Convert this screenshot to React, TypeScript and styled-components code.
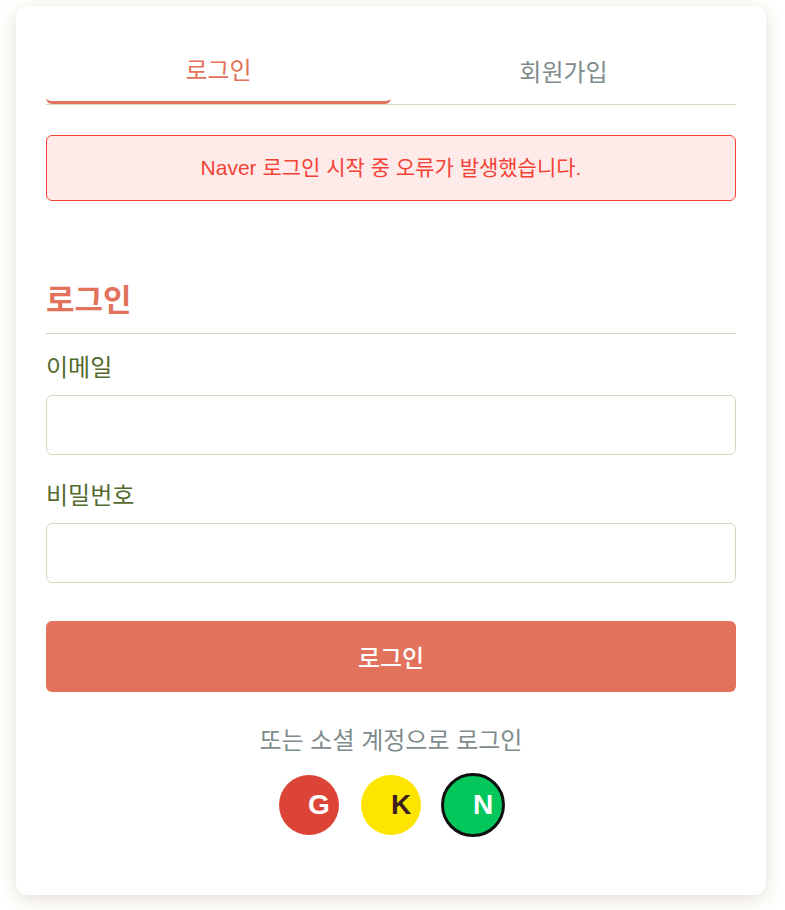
import React from 'react';
import styled, { createGlobalStyle } from 'styled-components';

const GlobalStyle = createGlobalStyle`
  *, *::before, *::after { box-sizing: border-box; }
  body {
    margin: 0;
    background: #fffffe;
    color: #556b2f;
    font-family: "Liberation Sans", "Noto Sans CJK KR", sans-serif;
    font-size: 24px;
  }
`;

const Card = styled.main`
  margin: 6px 19px 15px 16px;
  padding: 30px 30px 60px;
  background: #fff;
  border-radius: 12px;
  box-shadow: 0 4px 18px rgba(110, 95, 35, 0.2);
`;

const Tabs = styled.div`
  display: flex;
  border-bottom: 1px solid #d9d5c0;
`;

const Tab = styled.button<{ $active?: boolean }>`
  flex: 1;
  height: 68px;
  padding: 0;
  border: 0;
  border-bottom: ${p => (p.$active ? '3px solid #e2725b' : '0')};
  border-radius: 6px;
  background: transparent;
  color: ${p => (p.$active ? '#e2725b' : '#7f8c8d')};
  font: inherit;
`;

const Alert = styled.div`
  margin-top: 30px;
  padding: 16px;
  border: 1px solid #f44336;
  border-radius: 6px;
  background: #feebe9;
  color: #f44336;
  font-size: 21px;
  line-height: 32px;
  text-align: center;
`;

const Form = styled.form`
  display: flex;
  flex-direction: column;
  margin-top: 76px;
`;

const Title = styled.h2`
  margin: 0 0 16px;
  padding-bottom: 9px;
  border-bottom: 1px solid #d9d5c0;
  color: #e2725b;
  font-size: 31px;
  font-weight: 700;
  line-height: 47px;
`;

const Label = styled.label`
  line-height: 36px;
  margin-bottom: 9px;
`;

const Input = styled.input`
  width: 100%;
  height: 60px;
  margin-bottom: 23px;
  padding: 0 16px;
  border: 1px solid #d9d5c0;
  border-radius: 6px;
  background: #fff;
  font: inherit;
`;

const Submit = styled.button`
  height: 71px;
  margin-top: 15px;
  border: 0;
  border-radius: 6px;
  background: #e2725b;
  color: #fff;
  font: inherit;
  font-weight: 500;
`;

const Social = styled.section`
  display: flex;
  flex-direction: column;
  align-items: center;
  margin-top: 31px;
  color: #7f8c8d;
`;

const SocialText = styled.p`
  margin: 0;
  line-height: 36px;
`;

const SocialList = styled.div`
  display: flex;
  gap: 22px;
  margin-top: 16px;
`;

const SocialButton = styled.button<{ $bg: string; $fg: string; $focused?: boolean }>`
  width: 60px;
  height: 60px;
  padding: 0 0 0 20px;
  border: 0;
  border-radius: 50%;
  background: ${p => p.$bg};
  color: ${p => p.$fg};
  outline: ${p => (p.$focused ? '3px solid #101010' : 'none')};
  outline-offset: -1px;
  font: 700 28px "Liberation Sans", sans-serif;
`;

export default function App() {
  return (
    <>
      <GlobalStyle />
      <Card>
        <Tabs role="tablist">
          <Tab role="tab" aria-selected="true" $active>로그인</Tab>
          <Tab role="tab" aria-selected="false">회원가입</Tab>
        </Tabs>
        <Alert role="alert">Naver 로그인 시작 중 오류가 발생했습니다.</Alert>
        <Form onSubmit={e => e.preventDefault()}>
          <Title>로그인</Title>
          <Label htmlFor="email">이메일</Label>
          <Input id="email" type="email" />
          <Label htmlFor="password">비밀번호</Label>
          <Input id="password" type="password" />
          <Submit type="submit">로그인</Submit>
        </Form>
        <Social>
          <SocialText>또는 소셜 계정으로 로그인</SocialText>
          <SocialList>
            <SocialButton type="button" $bg="#db4437" $fg="#fff">G</SocialButton>
            <SocialButton type="button" $bg="#fee500" $fg="#3c1e1e">K</SocialButton>
            <SocialButton type="button" $bg="#03c75a" $fg="#fff" $focused>N</SocialButton>
          </SocialList>
        </Social>
      </Card>
    </>
  );
}
